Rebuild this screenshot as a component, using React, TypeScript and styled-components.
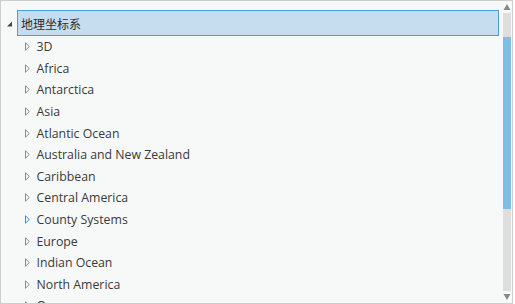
import React from "react";
import styled, { createGlobalStyle } from "styled-components";

const Global = createGlobalStyle`
  html, body { margin: 0; padding: 0; background: #ffffff; }
  body { font-family: "Segoe UI", "Open Sans", "Noto Sans CJK SC", sans-serif; }
`;

const Frame = styled.div`
  box-sizing: border-box;
  width: 513px;
  height: 304px;
  border: 1px solid #cdcdcd;
  background: #f7f8f8;
  display: flex;
  overflow: hidden;
`;

const Tree = styled.div`
  flex: 1;
  padding: 9px 2px 0 4px;
  overflow: hidden;
`;

const HeaderRow = styled.div`
  display: flex;
  align-items: center;
  height: 26px;
`;

const Expander = styled.svg`
  width: 12px;
  height: 26px;
  flex: none;
`;

const HeaderBox = styled.div`
  flex: 1;
  box-sizing: border-box;
  height: 26px;
  border: 1px solid #4c9de0;
  background: #c6dcef;
  display: flex;
  align-items: center;
  padding-left: 3px;
  font-family: "Noto Sans CJK SC", sans-serif;
  font-size: 12px;
  color: #2b2b2b;
`;

const Row = styled.div`
  display: flex;
  align-items: center;
  height: 21.6px;
  padding-left: 19.5px;
`;

const Caret = styled.svg`
  width: 5px;
  height: 9px;
  flex: none;
  margin-right: 7px;
`;

const Label = styled.span`
  font-family: "Open Sans", sans-serif;
  font-size: 12.3px;
  color: #3a3a3a;
  white-space: nowrap;
`;

const Scrollbar = styled.div`
  width: 8px;
  margin: 0 1px 0 2px;
  display: flex;
  flex-direction: column;
  align-items: center;
`;

const ArrowBox = styled.div`
  height: 12px;
  display: flex;
  align-items: center;
  justify-content: center;
`;

const Track = styled.div`
  flex: 1;
  width: 8px;
  background: #dedede;
  padding-top: 24px;
  box-sizing: border-box;
`;

const Thumb = styled.div`
  width: 8px;
  height: 172px;
  background: #7dbde9;
`;

const items = [
  "3D",
  "Africa",
  "Antarctica",
  "Asia",
  "Atlantic Ocean",
  "Australia and New Zealand",
  "Caribbean",
  "Central America",
  "County Systems",
  "Europe",
  "Indian Ocean",
  "North America",
  "Oceans",
];

export default function App() {
  return (
    <>
      <Global />
      <Frame>
        <Tree>
          <HeaderRow>
            <Expander viewBox="0 0 12 26">
              <path d="M2 16.5 L7 11.5 L7 16.5 Z" fill="#444" />
            </Expander>
            <HeaderBox>地理坐标系</HeaderBox>
          </HeaderRow>
          {items.map((t) => (
            <Row key={t}>
              <Caret viewBox="0 0 5 9">
                <path
                  d="M0.5 0.8 L4.3 4.5 L0.5 8.2 Z"
                  fill="none"
                  stroke={t === "County Systems" ? "#3b8fd8" : "#8a8a8a"}
                  strokeWidth="1"
                />
              </Caret>
              <Label>{t}</Label>
            </Row>
          ))}
        </Tree>
        <Scrollbar>
          <ArrowBox>
            <svg width="8" height="8" viewBox="0 0 8 8">
              <path d="M0.5 7 L4 1 L7.5 7 Z" fill="#888" />
            </svg>
          </ArrowBox>
          <Track>
            <Thumb />
          </Track>
          <ArrowBox>
            <svg width="8" height="8" viewBox="0 0 8 8">
              <path d="M0.5 1 L4 7 L7.5 1 Z" fill="#888" />
            </svg>
          </ArrowBox>
        </Scrollbar>
      </Frame>
    </>
  );
}
